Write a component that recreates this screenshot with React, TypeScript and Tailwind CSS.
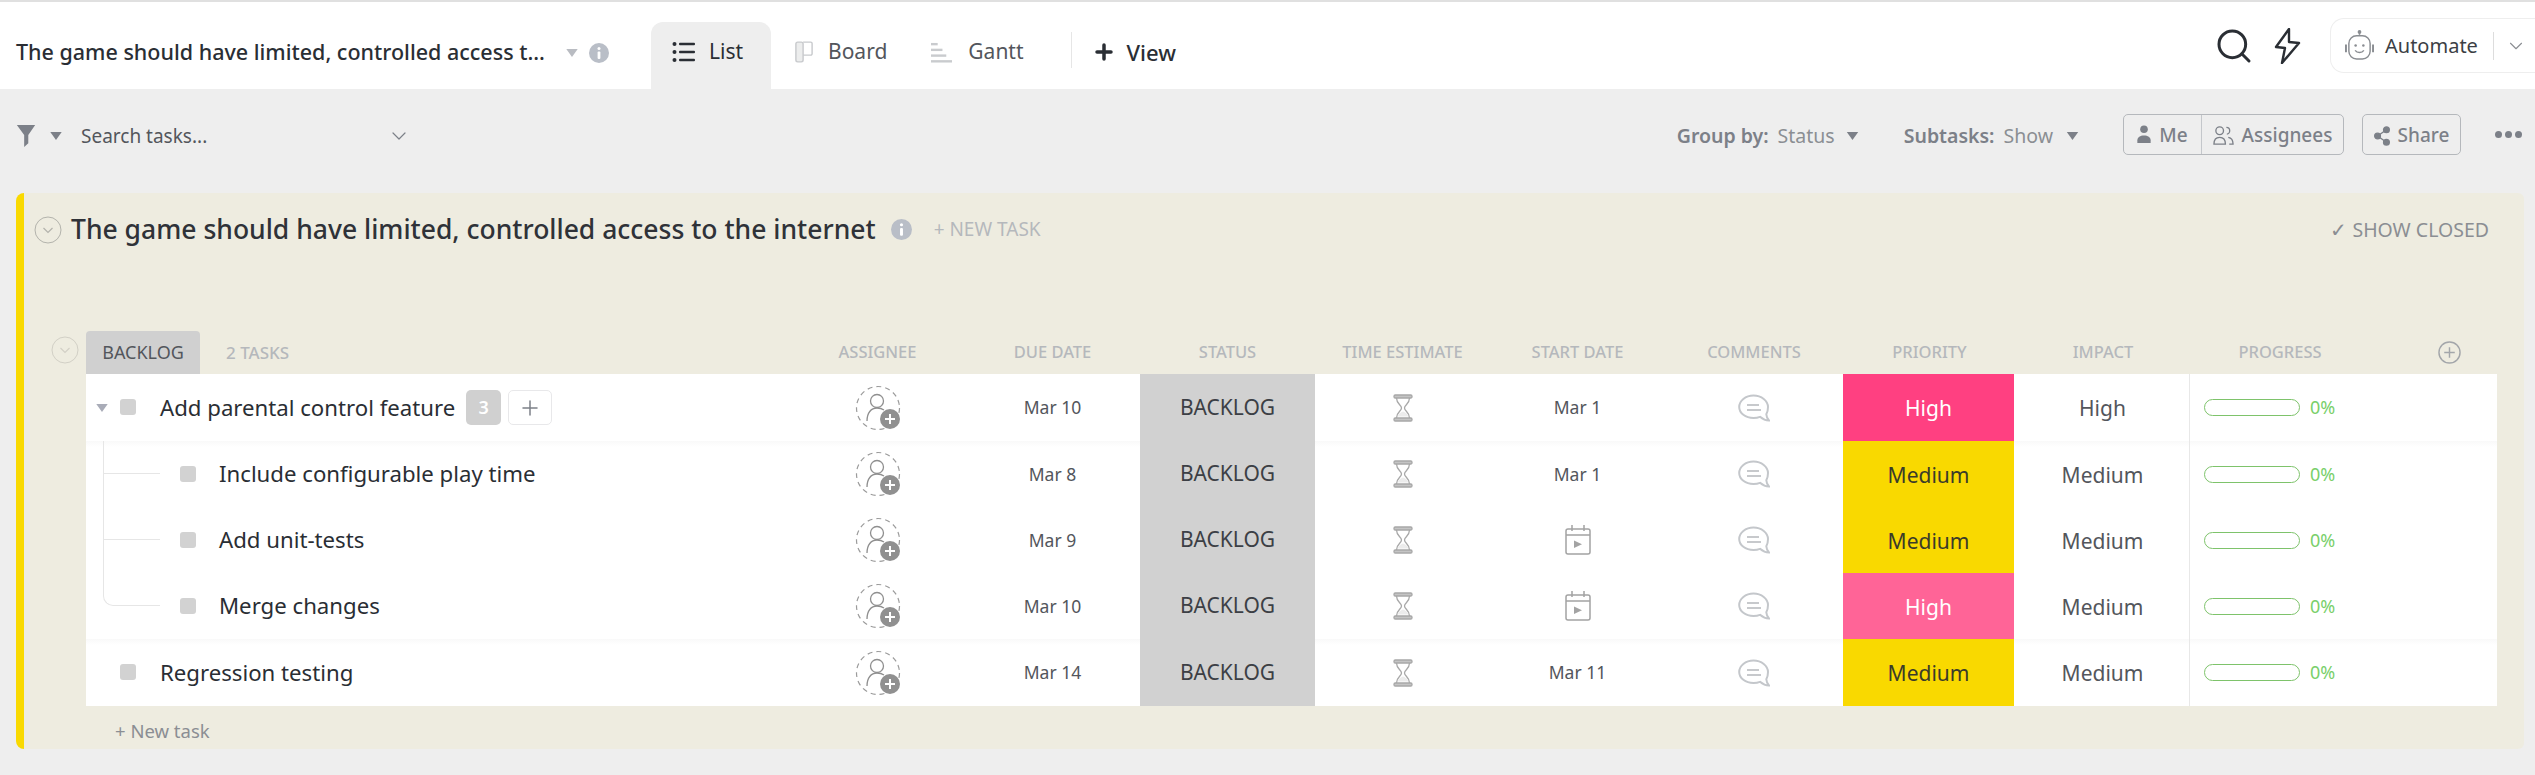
import React from "react";
import { ChevronDown, Plus, Search } from "lucide-react";

const COLUMNS =
  "grid grid-cols-[704px_175px_175px_175px_175px_175px_178px_173px_174px_1fr]";

type Task = {
  name: string;
  sub?: boolean;
  last?: boolean;
  parent?: boolean;
  due: string;
  start?: string;
  priority: "High" | "Medium";
  priorityBg: string;
  impact: string;
  divider?: boolean;
  height: string;
};

const tasks: Task[] = [
  { name: "Add parental control feature", parent: true, due: "Mar 10", start: "Mar 1", priority: "High", priorityBg: "bg-[#ff4081] text-white", impact: "High", height: "h-[67px]" },
  { name: "Include configurable play time", sub: true, due: "Mar 8", start: "Mar 1", priority: "Medium", priorityBg: "bg-[#f9d900] text-[#3b3b2a]", impact: "Medium", divider: true, height: "h-[66px]" },
  { name: "Add unit-tests", sub: true, due: "Mar 9", priority: "Medium", priorityBg: "bg-[#f9d900] text-[#3b3b2a]", impact: "Medium", height: "h-[66px]" },
  { name: "Merge changes", sub: true, last: true, due: "Mar 10", priority: "High", priorityBg: "bg-[#ff6497] text-white", impact: "Medium", height: "h-[66px]" },
  { name: "Regression testing", due: "Mar 14", start: "Mar 11", priority: "Medium", priorityBg: "bg-[#f9d900] text-[#3b3b2a]", impact: "Medium", divider: true, height: "h-[67px]" },
];

const headers = ["ASSIGNEE", "DUE DATE", "STATUS", "TIME ESTIMATE", "START DATE", "COMMENTS", "PRIORITY", "IMPACT", "PROGRESS"];

const Caret = ({ className }: { className: string }) => (
  <svg viewBox="0 0 10 7" className={className} fill="currentColor">
    <path d="M0 0h10L5 7z" />
  </svg>
);

const CircleChevron = ({ className }: { className: string }) => (
  <svg viewBox="0 0 28 28" className={className} fill="none" stroke="currentColor">
    <circle cx="14" cy="14" r="13" strokeWidth="1" />
    <path d="M9.500 12l4.500 4.500 4.500-4.500" strokeWidth="1.200" />
  </svg>
);

const InfoDot = ({ className }: { className: string }) => (
  <svg viewBox="0 0 20 20" className={className}>
    <circle cx="10" cy="10" r="10" fill="currentColor" />
    <circle cx="10" cy="5.500" r="1.500" fill="#fff" />
    <rect x="8.600" y="8.500" width="2.800" height="7.500" rx="1" fill="#fff" />
  </svg>
);

const AssigneeIcon = () => (
  <svg viewBox="0 0 46 46" className="w-[46px] h-[46px]" fill="none">
    <circle cx="23" cy="23" r="21.500" stroke="#9b9b9b" strokeWidth="1.200" strokeDasharray="5 4" />
    <circle cx="22" cy="16" r="6.500" stroke="#8f8f8f" strokeWidth="1.300" />
    <path d="M12 36c0-8 4-13 10-13 3 0 5 .6 7 2" stroke="#8f8f8f" strokeWidth="1.300" />
    <circle cx="35" cy="34" r="10" fill="#909090" />
    <path d="M35 29v10M30 34h10" stroke="#fff" strokeWidth="2" />
  </svg>
);

const Hourglass = () => (
  <svg viewBox="0 0 20 28" className="w-[20px] h-[28px]" fill="none" stroke="#a8a8a8" strokeWidth="1.300">
    <rect x="1" y="1" width="18" height="3" rx="1.200" fill="#c4c4c4" />
    <rect x="1" y="24" width="18" height="3" rx="1.200" fill="#c4c4c4" />
    <path d="M3.500 4c0 6 5 7 5 10s-5 4-5 10M16.500 4c0 6-5 7-5 10s5 4 5 10" />
    <path d="M5 22.500c0-2.500 3-4.500 5-5 2 .5 5 2.500 5 5z" fill="#ececec" stroke="none" />
  </svg>
);

const CalendarPlay = () => (
  <svg viewBox="0 0 26 30" className="w-[26px] h-[30px]" fill="none" stroke="#a3a3a3" strokeWidth="1.500">
    <rect x="1" y="4" width="24" height="25" rx="2" />
    <path d="M1 10h24M7 0v6M19 0v6" />
    <path d="M9 15.500l8 3.700-8 3.700z" fill="#a3a3a3" stroke="none" />
  </svg>
);

const CommentIcon = () => (
  <svg viewBox="0 0 32 28" className="w-[32px] h-[28px]" fill="none" stroke="#c4c7cb" strokeWidth="2">
    <path d="M15.500 1.500C7.500 1.500 1.200 6.800 1.200 13S7.500 24 15.500 24c2.500 0 4.600-.4 6.500-1.200 2.500 2.200 5.500 3.700 9 3.700-1.500-1.500-2.500-3.500-2.700-6.200C29.500 18.200 30 15.600 30 13c0-6.200-6.500-11.500-14.500-11.500z" />
    <path d="M9 11h12M9 16h14" stroke="#b5b8bc" strokeWidth="1.600" />
  </svg>
);

const ListIcon = () => (
  <svg viewBox="0 0 24 24" className="w-[24px] h-[24px]" fill="#2a2e34">
    <circle cx="2.500" cy="4" r="2" />
    <circle cx="2.500" cy="12" r="2" />
    <circle cx="2.500" cy="20" r="2" />
    <rect x="7" y="2.700" width="16" height="2.600" rx="1" />
    <rect x="7" y="10.700" width="16" height="2.600" rx="1" />
    <rect x="7" y="18.700" width="16" height="2.600" rx="1" />
  </svg>
);

const BoardIcon = () => (
  <svg viewBox="0 0 20 24" className="w-[18px] h-[22px]" fill="none" stroke="#c8cacd" strokeWidth="1.600">
    <rect x="1" y="1" width="8" height="22" rx="2" fill="#eceded" />
    <path d="M9 1h8.500A1.500 1.500 0 0 1 19 2.500V14a1.500 1.500 0 0 1-1.500 1.500H9" />
  </svg>
);

const GanttIcon = () => (
  <svg viewBox="0 0 22 22" className="w-[21px] h-[21px]" fill="#c9cbce">
    <rect x="0" y="1" width="7" height="2.500" />
    <rect x="0" y="7" width="12" height="2.500" />
    <rect x="0" y="13" width="16" height="2.500" />
    <rect x="0" y="19" width="22" height="2.500" />
  </svg>
);

const Funnel = () => (
  <svg viewBox="0 0 20 24" className="w-[20px] h-[22px]" fill="#7c8088">
    <path d="M0 0h20l-7.500 11v9L8 24V11z" />
  </svg>
);

const MeIcon = () => (
  <svg viewBox="0 0 14 20" className="w-[14px] h-[19px]" fill="#7c8088">
    <circle cx="7" cy="4.500" r="4" />
    <path d="M0 19v-3c0-3 3-5 7-5s7 2 7 5v3z" />
  </svg>
);

const PeopleIcon = () => (
  <svg viewBox="0 0 22 22" className="w-[21px] h-[21px]" fill="none" stroke="#7c8088" strokeWidth="1.400">
    <circle cx="7" cy="6" r="4" />
    <path d="M1 20c0-5 2.500-7 6-7s6 2 6 7zM14 2.500c2.500 0 3.500 2 3.500 3.500s-1 3.500-3 3.500M16 13c3 .5 5 2.500 5 7h-4" />
  </svg>
);

const ShareIcon = () => (
  <svg viewBox="0 0 18 22" className="w-[16px] h-[20px]" fill="#7c8088" stroke="#7c8088" strokeWidth="1.600">
    <circle cx="4" cy="11" r="3.200" />
    <circle cx="14" cy="4" r="3.200" />
    <circle cx="14" cy="18" r="3.200" />
    <path d="M4 11L14 4M4 11l10 7" />
  </svg>
);

const BoltIcon = () => (
  <svg viewBox="0 0 28 36" className="w-[28px] h-[36px]" fill="none" stroke="#2a2e34" strokeWidth="2.400" strokeLinejoin="round">
    <path d="M15 1L2 19l9 1-3 15 17-20-10-1z" />
  </svg>
);

const RobotIcon = () => (
  <svg viewBox="0 0 30 32" className="w-[29px] h-[31px]" fill="none" stroke="#8a8d92" strokeWidth="1.500">
    <path d="M15 1v4" />
    <circle cx="15" cy="2" r="1.200" fill="#8a8d92" />
    <rect x="4" y="6" width="22" height="24" rx="8" />
    <path d="M1 15v8M29 15v8" strokeWidth="2" />
    <circle cx="11" cy="16" r="1.300" fill="#8a8d92" stroke="none" />
    <circle cx="19" cy="16" r="1.300" fill="#8a8d92" stroke="none" />
    <path d="M10.500 21c2 3 7 3 9 0" />
  </svg>
);

const TreeLine = ({ last }: { last?: boolean }) => (
  <div
    className={`absolute left-[17px] top-0 w-[57px] border-l border-b border-[#e6e6e6] ${
      last ? "h-[33px] rounded-bl-[10px]" : "h-[33px]"
    }`}
  >
    {!last && <div className="absolute -left-px top-[33px] h-[33px] border-l border-[#e6e6e6]" />}
  </div>
);

const TaskRow = ({ task }: { task: Task }) => (
  <div className={`${COLUMNS} relative ${task.height}`}>
    {task.divider && (
      <div className="absolute inset-x-0 top-0 h-[6px] bg-gradient-to-b from-[#f9f9f9] to-white" />
    )}
    <div className="relative flex items-center text-[22.200px] text-[#2a2e34]">
      {task.sub && <TreeLine last={task.last} />}
      <div className={`flex items-center ${task.sub ? "pl-[94px]" : "pl-[34px]"}`}>
        <span className="w-[16px] h-[16px] rounded-[3px] bg-[#d2d2d2]" />
        <span className={`${task.sub ? "ml-[23px]" : "ml-[24px]"} whitespace-nowrap`}>{task.name}</span>
      </div>
      {task.parent && (
        <>
          <Caret className="absolute left-[10px] top-[30px] w-[12px] h-[8px] text-[#a9acb8]" />
          <span className="ml-[11px] w-[35px] h-[35px] rounded-[5px] bg-[#d0d0d0] text-white text-[18px] font-semibold flex items-center justify-center">
            3
          </span>
          <span className="ml-[7px] w-[44px] h-[35px] rounded-[5px] bg-white border border-[#e8e8ea] flex items-center justify-center">
            <Plus className="w-[24px] h-[24px] text-[#7c8088]" strokeWidth={1.5} />
          </span>
        </>
      )}
    </div>
    <div className="flex items-center justify-center">
      <AssigneeIcon />
    </div>
    <div className="relative flex items-center justify-center text-[17.500px] text-[#53565c]">{task.due}</div>
    <div className="relative flex items-center justify-center bg-[#d1d1d1] text-[21px] text-[#3c3f45]">BACKLOG</div>
    <div className="flex items-center justify-center">
      <Hourglass />
    </div>
    <div className="relative flex items-center justify-center text-[17.500px] text-[#53565c]">
      {task.start ?? <CalendarPlay />}
    </div>
    <div className="flex items-center justify-center">
      <CommentIcon />
    </div>
    <div className="relative pr-[2px] flex">
      <div className={`flex-1 flex items-center justify-center pt-[3px] text-[21px] ${task.priorityBg}`}>{task.priority}</div>
    </div>
    <div className="relative flex items-center justify-center pt-[3px] text-[21px] text-[#53565c] border-r border-[#e8e8e8]">
      {task.impact}
    </div>
    <div className="relative flex items-center pl-[14px] gap-[10px]">
      <div className="w-[96px] h-[17px] rounded-full border border-[#7ec36b] bg-white" />
      <span className="text-[18px] text-[#79cf6a]">0%</span>
    </div>
  </div>
);

export default function App() {
  return (
    <div className="w-[2535px] h-[775px] overflow-hidden bg-[#eeeeee] font-['Noto_Sans',sans-serif]">
      {/* Top bar */}
      <header className="h-[89px] bg-white border-t-2 border-[#e0e0e0] flex items-stretch">
        <div className="w-[651px] shrink-0 pl-4 pt-[14px] flex items-center">
          <span className="text-[21.500px] font-medium text-[#2a2e34] whitespace-nowrap w-[545px]">
            The game should have limited, controlled access t...
          </span>
          <Caret className="ml-[5px] w-[12px] h-[8px] text-[#b9bcc2]" />
          <InfoDot className="ml-[11px] w-[20px] h-[20px] text-[#b9bec7]" />
        </div>
        <div className="mt-[20px] pb-[7px] w-[120px] rounded-t-[12px] bg-[#eeeeee] flex items-center pl-[21px] gap-[13px] text-[21px] text-[#2a2e34]">
          <ListIcon />
          <span>List</span>
        </div>
        <div className="mt-[20px] pb-[7px] flex items-center pl-[24px] gap-[15px] text-[21px] text-[#53565c]">
          <BoardIcon />
          <span>Board</span>
        </div>
        <div className="mt-[20px] pb-[7px] flex items-center pl-[44px] gap-[16px] text-[21px] text-[#53565c]">
          <GanttIcon />
          <span>Gantt</span>
        </div>
        <div className="ml-[47px] mt-[30px] h-[36px] border-l border-[#e6e6e6]" />
        <div className="mt-[20px] pb-[7px] flex items-center pl-[20px] gap-[11px] text-[22px] font-medium text-[#2a2e34]">
          <Plus className="w-[24px] h-[24px]" strokeWidth={3.500} />
          <span>View</span>
        </div>
        <div className="ml-auto flex items-center">
          <Search className="w-[40px] h-[40px] text-[#2a2e34]" strokeWidth={1.800} />
          <div className="ml-[20px]">
            <BoltIcon />
          </div>
          <div className="ml-[28px] w-[205px] h-[55px] rounded-l-[14px] border border-r-0 border-[#eeeeee] flex items-center pl-[14px]">
            <RobotIcon />
            <span className="ml-[11px] text-[20px] text-[#3c3f45]">Automate</span>
            <div className="ml-[15px] h-[28px] border-l border-[#dddddd]" />
            <ChevronDown className="ml-[11px] w-[22px] h-[22px] text-[#8a8d92]" strokeWidth={1.200} />
          </div>
        </div>
      </header>

      {/* Filter row */}
      <div className="h-[104px] px-4 flex items-start pt-[25px]">
        <div className="h-[41px] pt-[3px] flex items-center w-[400px]">
          <Funnel />
          <Caret className="ml-[13px] w-[14px] h-[8px] text-[#7c8088]" />
          <span className="ml-[18px] text-[19px] text-[#53565c]">Search tasks...</span>
          <ChevronDown className="ml-[180px] w-[24px] h-[24px] text-[#7c8088]" strokeWidth={1.200} />
        </div>
        <div className="ml-auto h-[41px] flex items-center text-[19px] text-[#7c8088]">
          <div className="flex items-center pt-[3px] text-[19.500px]">
            <span className="font-semibold">Group by:</span>
            <span className="ml-[9px] text-[#8b8e93]">Status</span>
            <Caret className="ml-[11px] w-[13px] h-[8px]" />
            <span className="ml-[45px] font-semibold">Subtasks:</span>
            <span className="ml-[9px] text-[#8b8e93]">Show</span>
            <Caret className="ml-[13px] w-[13px] h-[8px]" />
          </div>
          <div className="ml-[44px] h-[41px] w-[221px] flex rounded-[5px] border border-[#b5b8bc] font-medium pt-[2px]">
            <div className="w-[78px] flex items-center justify-center gap-[8px] border-r border-[#c4c7cb] -mt-[2px]">
              <MeIcon />
              <span className="pt-[2px]">Me</span>
            </div>
            <div className="flex-1 flex items-center justify-center gap-[8px]">
              <PeopleIcon />
              <span>Assignees</span>
            </div>
          </div>
          <div className="ml-[18px] h-[41px] w-[99px] pt-[2px] flex items-center justify-center gap-[8px] rounded-[5px] border border-[#b5b8bc] font-medium">
            <ShareIcon />
            <span>Share</span>
          </div>
          <div className="ml-[34px] mr-[-3px] flex gap-[3px]">
            <span className="w-[7px] h-[7px] rounded-full bg-[#7c8088]" />
            <span className="w-[7px] h-[7px] rounded-full bg-[#7c8088]" />
            <span className="w-[7px] h-[7px] rounded-full bg-[#7c8088]" />
          </div>
        </div>
      </div>

      {/* List panel */}
      <section className="ml-4 mr-[11px] h-[556px] rounded-l-[8px] rounded-r-[6px] bg-[#eeece0] border-l-[8px] border-[#f9d900]">
        <div className="h-[73px] flex items-center pl-[10px]">
          <CircleChevron className="w-[28px] h-[28px] text-[#b3b3ac]" />
          <h1 className="ml-[9px] text-[26.500px] font-medium text-[#2f3238] whitespace-nowrap">
            The game should have limited, controlled access to the internet
          </h1>
          <InfoDot className="ml-[15px] w-[21px] h-[21px] text-[#b9bec7]" />
          <span className="ml-[22px] text-[19px] text-[#b5b8bc]">+ NEW TASK</span>
          <span className="ml-auto mr-[35px] text-[19.500px] text-[#8b8e93]">✓ SHOW CLOSED</span>
        </div>
        <div className="mt-[65px] ml-[27px] mr-[27px] h-[43px] relative flex">
          <CircleChevron className="absolute left-0 top-[5px] w-[28px] h-[28px] text-[#d2d0c6]" />
          <div className="ml-[35px] shrink-0 w-[704px] flex items-center">
            <div className="h-full w-[114px] rounded-t-[4px] bg-[#d0d0d0] flex items-center justify-center text-[18px] text-[#53565c]">
              BACKLOG
            </div>
            <span className="ml-[26px] text-[17px] font-medium text-[#b5b8bc]">2 TASKS</span>
          </div>
          <div className="flex-1 grid grid-cols-[175px_175px_175px_175px_175px_178px_173px_174px_180px_1fr] text-[16.500px] font-medium text-[#b5b8bc]">
            {headers.map((h) => (
              <div key={h} className="flex items-center justify-center whitespace-nowrap">
                {h}
              </div>
            ))}
            <div className="relative">
              <svg viewBox="0 0 24 24" className="absolute left-[68px] top-[10px] w-[23px] h-[23px]" fill="none" stroke="#a3a6aa" strokeWidth="1.500">
                <circle cx="12" cy="12" r="11" />
                <path d="M12 6.500v11M6.500 12h11" />
              </svg>
            </div>
          </div>
        </div>
        <div className="ml-[62px] mr-[27px] bg-white">
          {tasks.map((t) => (
            <TaskRow key={t.name} task={t} />
          ))}
        </div>
        <div className="ml-[91px] mt-[11px] text-[18.500px] text-[#8b8e93]">+ New task</div>
      </section>
    </div>
  );
}
